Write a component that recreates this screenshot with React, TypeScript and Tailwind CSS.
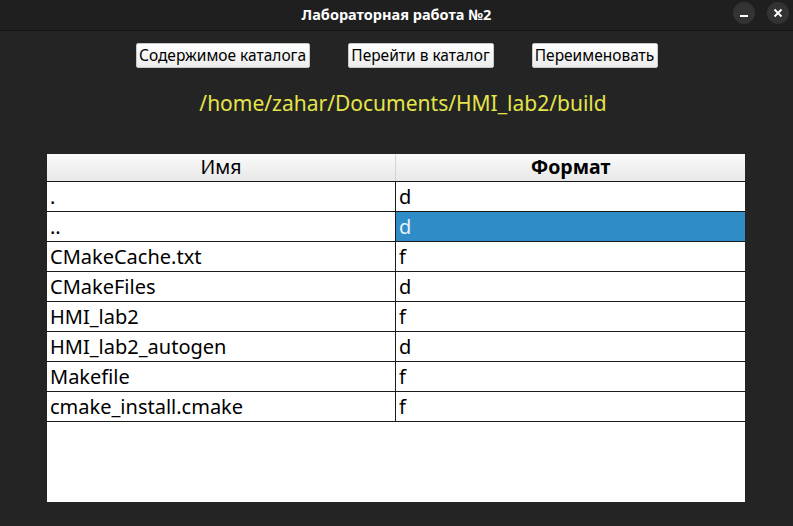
import React from "react";

const rows: [string, string][] = [
  [".", "d"],
  ["..", "d"],
  ["CMakeCache.txt", "f"],
  ["CMakeFiles", "d"],
  ["HMI_lab2", "f"],
  ["HMI_lab2_autogen", "d"],
  ["Makefile", "f"],
  ["cmake_install.cmake", "f"],
];

const font = { fontFamily: '"Noto Sans", "Open Sans", sans-serif' };

export default function App() {
  return (
    <div className="w-[793px] h-[526px] bg-[#242424] flex flex-col overflow-hidden" style={font}>
      <div className="relative h-[31px] shrink-0 bg-[#1f1f1f] border-b border-[#151515] flex items-center justify-center">
        <span className="text-[14.5px] font-bold text-white">Лабораторная работа №2</span>
        <div className="absolute right-[4px] top-[2px] flex gap-[12px]">
          <div className="w-[22px] h-[22px] rounded-full bg-[#333333] flex items-center justify-center">
            <div className="w-[8px] h-[2px] bg-white mt-[5px]" />
          </div>
          <div className="w-[22px] h-[22px] rounded-full bg-[#333333] flex items-center justify-center">
            <svg width="10" height="10" viewBox="0 0 10 10">
              <path d="M1.5 1.5 L8.5 8.5 M8.5 1.5 L1.5 8.5" stroke="white" strokeWidth="1.8" />
            </svg>
          </div>
        </div>
      </div>
      <div className="flex justify-center gap-[38px] mt-[12px]">
        {[
          ["Содержимое каталога", "w-[174px]"],
          ["Перейти в каталог", "w-[146px]"],
          ["Переименовать", "w-[126px]"],
        ].map(([t, w]) => (
          <div
            key={t}
            className={`${w} h-[25px] rounded-[2px] bg-gradient-to-b from-white to-[#ececec] border border-[#c8c8c8] flex items-center justify-center text-[15.5px] text-black whitespace-nowrap`}
          >
            {t}
          </div>
        ))}
      </div>
      <div className="mt-[21px] pl-[13px] text-center text-[21px] text-[#e5e54a] leading-[28px]">
        /home/zahar/Documents/HMI_lab2/build
      </div>
      <div className="ml-[47px] mt-[37px] w-[698px] h-[348px] bg-white flex flex-col">
        <div className="h-[28px] flex border-b border-[#1a1a1a] bg-gradient-to-b from-[#fafafa] to-[#e8e8e8] text-[19.5px] leading-[26px] text-black">
          <div className="w-[349px] border-r border-[#d4d4d4] text-center">Имя</div>
          <div className="flex-1 text-center font-bold">Формат</div>
        </div>
        {rows.map(([n, f], i) => (
          <div key={i} className="h-[30px] flex border-b border-[#1a1a1a] text-[20px] leading-[29px] text-black">
            <div className="w-[349px] border-r border-[#1a1a1a] pl-[3px]">{n}</div>
            <div className={`flex-1 pl-[3px] ${i === 1 ? "bg-[#308cc6] text-[#e6f2fa]" : ""}`}>{f}</div>
          </div>
        ))}
      </div>
    </div>
  );
}
